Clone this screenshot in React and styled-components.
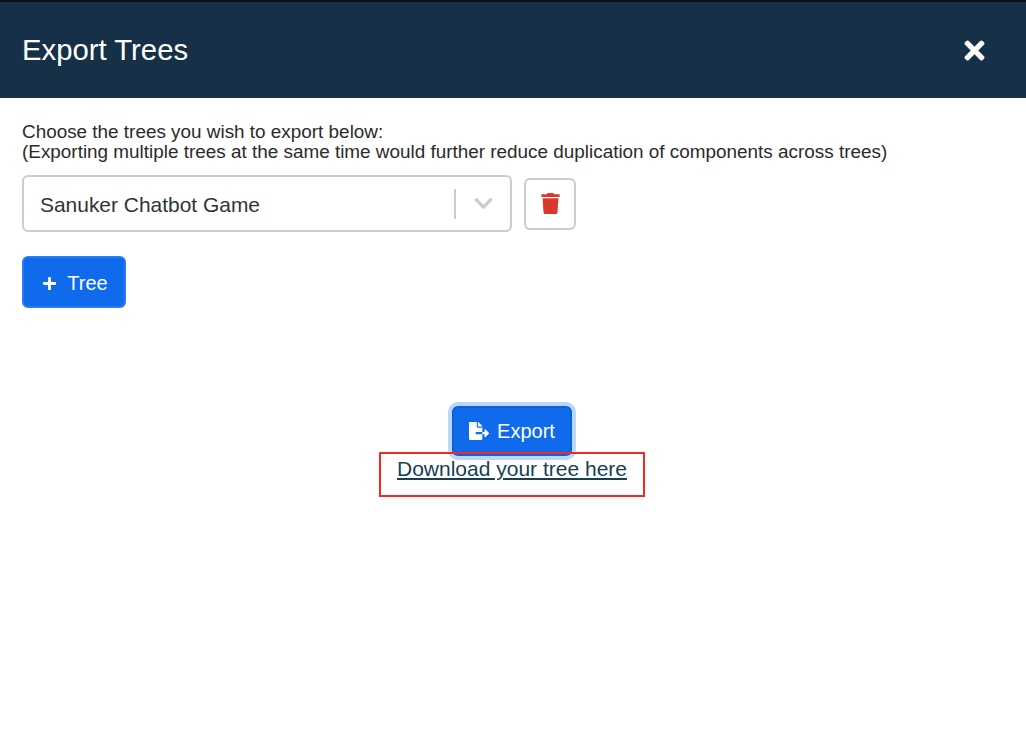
import React from "react";
import styled, { createGlobalStyle } from "styled-components";
import { FaTimes, FaTrash, FaPlus, FaFileExport, FaChevronDown } from "react-icons/fa";

const Global = createGlobalStyle`
  html, body { margin: 0; padding: 0; background: #fff; }
  body { font-family: "Liberation Sans", Arial, sans-serif; color: #212529; }
`;
const Modal = styled.div`
  width: 1026px; height: 750px; overflow: hidden; background: #fff; display: flex; flex-direction: column;
`;
const Header = styled.header`
  height: 96px; border-top: 2px solid #0a1119; background: #163047; color: #fff;
  display: flex; align-items: center; justify-content: space-between; padding: 0 37px 0 22px;
`;
const Title = styled.h1`
  margin: 0; font-size: 29.3px; font-weight: 400; line-height: 32px;
`;
const Close = styled.button`
  border: 0; background: none; color: #fff; padding: 0; display: flex; font-size: 29px;
`;
const Body = styled.main`
  flex: 1; padding: 24px 24px 0 22px; display: flex; flex-direction: column;
`;
const Hint = styled.p`
  margin: 0; font-size: 18.9px; line-height: 20px; color: #2b2b2b; white-space: nowrap;
`;
const SelectRow = styled.div`
  display: flex; align-items: center; gap: 12px; margin-top: 13px;
`;
const Select = styled.div`
  width: 490px; height: 57px; box-sizing: border-box; border: 2px solid #cccccc; border-radius: 6px;
  display: flex; align-items: center; padding-left: 16px; font-size: 20.95px; color: #333;
`;
const SelectValue = styled.span` flex: 1; padding-top: 3px; `;
const Divider = styled.span`
  width: 2px; height: 30px; background: #cccccc;
`;
const Chevron = styled.span`
  width: 54px; display: flex; justify-content: center; color: #cccccc; font-size: 21px;
`;
const DeleteButton = styled.button`
  width: 52px; height: 52px; box-sizing: border-box; border: 2px solid #cccccc; border-radius: 6px;
  background: #fff; color: #d9382a; font-size: 21px; display: flex; align-items: center; justify-content: center; padding: 0;
`;
const PrimaryButton = styled.button`
  box-sizing: border-box; height: 52px; border: 2px solid #2a7bf6; border-radius: 6px; background: #0f6bec;
  color: #fff; font-family: inherit; font-size: 20px; display: inline-flex; align-items: center; padding: 0;
`;
const AddButton = styled(PrimaryButton)`
  align-self: flex-start; margin-top: 24px; width: 104px; justify-content: center; gap: 10px;
  padding: 2px 0 0 2px;
  svg { font-size: 15px; }
`;
const ExportArea = styled.div`
  position: relative; display: flex; flex-direction: column; align-items: center; margin-top: 98px;
`;
const ExportButton = styled(PrimaryButton)`
  width: 120px; height: 50px; justify-content: center; gap: 8px; border-color: #0f5fd8;
  box-shadow: 0 0 0 4px #b9d6fb; position: relative; z-index: 0;
  svg { font-size: 20px; }
`;
const DownloadLink = styled.a`
  font-size: 21px; line-height: 26px; color: #163f55; text-decoration: underline;
`;
const Annotation = styled.div`
  position: absolute; left: 357px; top: 46px; width: 266px; height: 45px; box-sizing: border-box;
  border: 2px solid #f02a20; pointer-events: none;
`;

export default function App() {
  return (
    <Modal>
      <Global />
      <Header>
        <Title>Export Trees</Title>
        <Close aria-label="Close"><FaTimes /></Close>
      </Header>
      <Body>
        <Hint>
          Choose the trees you wish to export below:<br />
          (Exporting multiple trees at the same time would further reduce duplication of components across trees)
        </Hint>
        <SelectRow>
          <Select>
            <SelectValue>Sanuker Chatbot Game</SelectValue>
            <Divider />
            <Chevron><FaChevronDown /></Chevron>
          </Select>
          <DeleteButton aria-label="Delete"><FaTrash /></DeleteButton>
        </SelectRow>
        <AddButton><FaPlus /> Tree</AddButton>
        <ExportArea>
          <ExportButton><FaFileExport /> Export</ExportButton>
          <DownloadLink href="#">Download your tree here</DownloadLink>
          <Annotation />
        </ExportArea>
      </Body>
    </Modal>
  );
}
